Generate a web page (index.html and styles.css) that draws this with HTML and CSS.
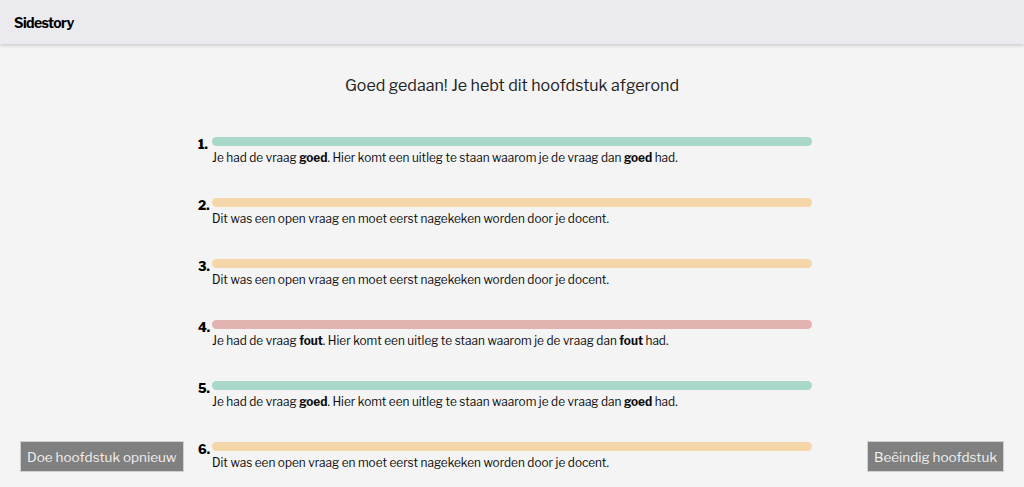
FILE: index.html
```html
<!DOCTYPE html>
<html lang="nl">
<head>
<meta charset="utf-8">
<title>Sidestory</title>
<link rel="stylesheet" href="styles.css">
</head>
<body>
<header class="topbar">
  <span class="brand">Sidestory</span>
</header>
<main class="content">
  <h1 class="title">Goed gedaan! Je hebt dit hoofdstuk afgerond</h1>
  <ol class="results">
    <li class="result">
      <span class="num">1.</span>
      <div class="body">
        <div class="bar bar-good"></div>
        <p class="text">Je had de vraag <b>goed</b>. Hier komt een uitleg te staan waarom je de vraag dan <b>goed</b> had.</p>
      </div>
    </li>
    <li class="result">
      <span class="num">2.</span>
      <div class="body">
        <div class="bar bar-open"></div>
        <p class="text">Dit was een open vraag en moet eerst nagekeken worden door je docent.</p>
      </div>
    </li>
    <li class="result">
      <span class="num">3.</span>
      <div class="body">
        <div class="bar bar-open"></div>
        <p class="text">Dit was een open vraag en moet eerst nagekeken worden door je docent.</p>
      </div>
    </li>
    <li class="result">
      <span class="num">4.</span>
      <div class="body">
        <div class="bar bar-wrong"></div>
        <p class="text">Je had de vraag <b>fout</b>. Hier komt een uitleg te staan waarom je de vraag dan <b>fout</b> had.</p>
      </div>
    </li>
    <li class="result">
      <span class="num">5.</span>
      <div class="body">
        <div class="bar bar-good"></div>
        <p class="text">Je had de vraag <b>goed</b>. Hier komt een uitleg te staan waarom je de vraag dan <b>goed</b> had.</p>
      </div>
    </li>
    <li class="result">
      <span class="num">6.</span>
      <div class="body">
        <div class="bar bar-open"></div>
        <p class="text">Dit was een open vraag en moet eerst nagekeken worden door je docent.</p>
      </div>
    </li>
  </ol>
</main>
<button class="btn btn-left" type="button">Doe hoofdstuk opnieuw</button>
<button class="btn btn-right" type="button">Beëindig hoofdstuk</button>
</body>
</html>
```
FILE: styles.css
```css
* { box-sizing: border-box; }
html, body { margin: 0; padding: 0; }
body {
  background: #f4f4f4;
  font-family: "Libre Franklin", "Roboto", "Liberation Sans", sans-serif;
  color: #111;
  height: 487px;
  overflow: hidden;
}
.topbar {
  height: 44px;
  background: #ebeaee;
  box-shadow: 0 1px 4px rgba(0,0,0,0.22);
  display: flex;
  align-items: center;
  padding-left: 14px;
}
.brand {
  font-weight: 700;
  font-size: 14px;
  letter-spacing: -0.6px;
  color: #000;
}
.content {
  display: flex;
  flex-direction: column;
  align-items: center;
}
.title {
  margin: 32px 0 0;
  font-size: 16px;
  font-weight: 400;
  color: #222;
  line-height: 20px;
}
.results {
  list-style: none;
  margin: 41px 0 0;
  padding: 0;
  width: 600px;
  display: flex;
  flex-direction: column;
  gap: 32px;
}
.result {
  display: flex;
  align-items: flex-start;
  margin-left: -14px;
}
.num {
  width: 14px;
  font-weight: 800;
  font-size: 12.5px;
  line-height: 12px;
  padding-top: 2px;
  color: #000;
}
.body {
  width: 600px;
}
.bar {
  height: 9px;
  border-radius: 5px;
}
.bar-good { background: #a9d8cb; }
.bar-open { background: #f4d6a9; }
.bar-wrong { background: #e3b3b1; }
.text {
  margin: 5px 0 0;
  font-size: 11.8px;
  line-height: 15px;
  color: #0a0a0a;
}
.text b { font-weight: 700; }
.btn {
  position: fixed;
  bottom: 15px;
  height: 31px;
  padding: 0 6px;
  background: #808080;
  color: #f2f2f2;
  border: 1px solid #d0d0d0;
  font-family: inherit;
  font-size: 13.5px;
}
.btn-left { left: 20px; }
.btn-right { right: 20px; }
```
